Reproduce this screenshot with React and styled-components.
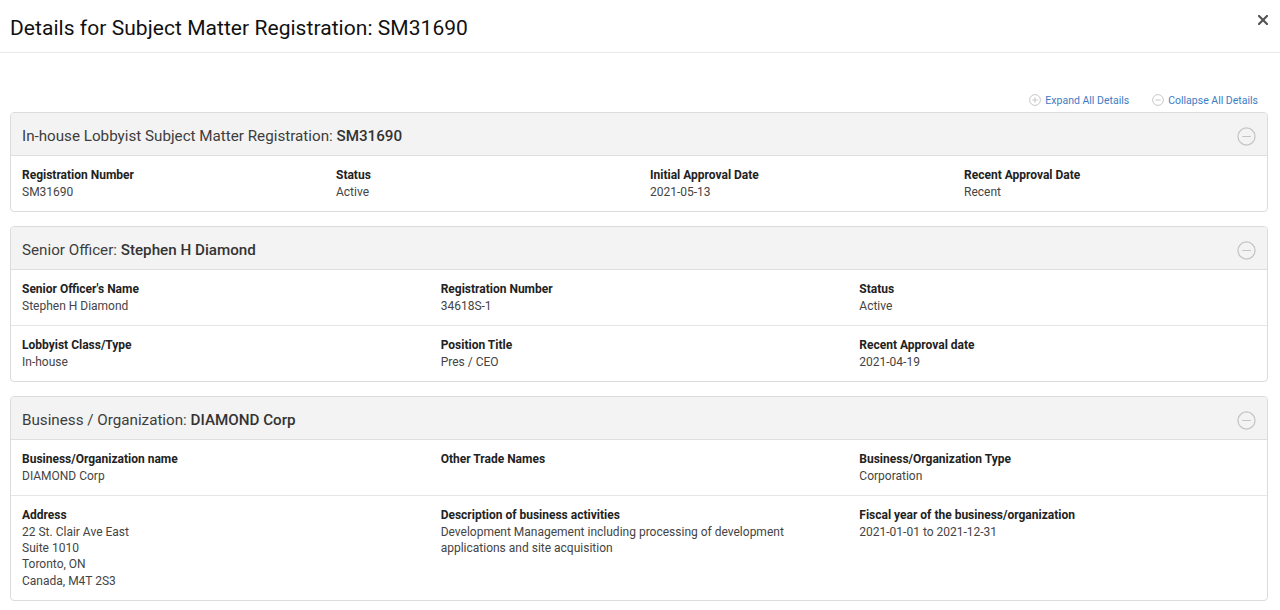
import React from "react";
import styled, { createGlobalStyle } from "styled-components";

const GlobalStyle = createGlobalStyle`
  html, body { margin: 0; padding: 0; background: #fff; }
  body { font-family: Roboto, "Liberation Sans", Arial, sans-serif; color: #333; }
  * { box-sizing: border-box; }
`;

const Modal = styled.div`
  width: 1280px;
  min-height: 610px;
  background: #fff;
`;

const TopBar = styled.header`
  height: 53px;
  border-bottom: 1px solid #e9e9e9;
  display: flex;
  align-items: center;
  justify-content: space-between;
  padding: 0 10px 0 10px;
`;

const Title = styled.h1`
  margin: 0;
  font-size: 21px;
  font-weight: 400;
  color: #111;
  letter-spacing: 0.05px;
  padding-top: 3px;
`;

const CloseButton = styled.button`
  border: 0;
  background: none;
  padding: 0;
  margin: -12px 0 0 0;
  width: 14px;
  height: 14px;
  display: flex;
  align-items: center;
  justify-content: center;
  cursor: pointer;
`;

const Body = styled.main`
  padding: 37px 12px 0 10px;
  display: flex;
  flex-direction: column;
  gap: 14px;
`;

const Toolbar = styled.div`
  display: flex;
  justify-content: flex-end;
  gap: 23px;
  padding-right: 10px;
  height: 20px;
  align-items: center;
  margin-bottom: -12px;
`;

const ToolLink = styled.a`
  display: inline-flex;
  align-items: center;
  gap: 4px;
  font-size: 10.5px;
  color: #3d7cc4;
  text-decoration: none;
  cursor: pointer;
`;

const Card = styled.section`
  border: 1px solid #dcdcdc;
  border-radius: 4px;
  overflow: hidden;
`;

const CardHeader = styled.div`
  height: 43px;
  background: #f3f3f3;
  border-bottom: 1px solid #dedede;
  display: flex;
  align-items: center;
  justify-content: space-between;
  padding: 4px 11px 0 11px;
`;

const CardTitle = styled.h2`
  margin: 0;
  font-size: 15.2px;
  font-weight: 400;
  color: #3d3d3d;
  strong { font-weight: 500; color: #333; }
`;

const Row = styled.div`
  display: grid;
  grid-template-columns: repeat(${(p) => p.$cols}, 1fr);
  & + & { border-top: 1px solid #e6e6e6; }
`;

const Field = styled.div`
  padding: 12px 11px 11px 11px;
  font-size: 12px;
`;

const Label = styled.div`
  font-weight: 700;
  color: #222;
  line-height: 15.7px;
`;

const Value = styled.div`
  color: #444;
  line-height: 16.3px;
  white-space: pre-line;
  max-width: ${(p) => (p.$narrow ? "360px" : "none")};
`;

const CircleIcon = ({ plus, size = 12, color = "#bdbdbd" }) => (
  <svg width={size} height={size} viewBox="0 0 20 20" fill="none" stroke={color} strokeWidth={size > 14 ? 1.3 : 1.4}>
    <circle cx="10" cy="10" r="9" />
    <line x1="5.5" y1="10" x2="14.5" y2="10" />
    {plus && <line x1="10" y1="5.5" x2="10" y2="14.5" />}
  </svg>
);

const sections = [
  {
    title: "In-house Lobbyist Subject Matter Registration: ",
    bold: "SM31690",
    cols: 4,
    rows: [
      [
        ["Registration Number", "SM31690"],
        ["Status", "Active"],
        ["Initial Approval Date", "2021-05-13"],
        ["Recent Approval Date", "Recent"],
      ],
    ],
  },
  {
    title: "Senior Officer: ",
    bold: "Stephen H Diamond",
    cols: 3,
    rows: [
      [
        ["Senior Officer's Name", "Stephen H Diamond"],
        ["Registration Number", "34618S-1"],
        ["Status", "Active"],
      ],
      [
        ["Lobbyist Class/Type", "In-house"],
        ["Position Title", "Pres / CEO"],
        ["Recent Approval date", "2021-04-19"],
      ],
    ],
  },
  {
    title: "Business / Organization: ",
    bold: "DIAMOND Corp",
    cols: 3,
    rows: [
      [
        ["Business/Organization name", "DIAMOND Corp"],
        ["Other Trade Names", ""],
        ["Business/Organization Type", "Corporation"],
      ],
      [
        ["Address", "22 St. Clair Ave East\nSuite 1010\nToronto, ON\nCanada, M4T 2S3"],
        ["Description of business activities", "Development Management including processing of development applications and site acquisition", true],
        ["Fiscal year of the business/organization", "2021-01-01 to 2021-12-31"],
      ],
    ],
  },
];

export default function App() {
  return (
    <>
      <GlobalStyle />
      <Modal>
        <TopBar>
          <Title>Details for Subject Matter Registration: SM31690</Title>
          <CloseButton aria-label="Close">
            <svg width="10" height="10" viewBox="0 0 10 10" stroke="#555" strokeWidth="2.2" strokeLinecap="square">
              <line x1="1" y1="1" x2="9" y2="9" />
              <line x1="9" y1="1" x2="1" y2="9" />
            </svg>
          </CloseButton>
        </TopBar>
        <Body>
          <Toolbar>
            <ToolLink>
              <CircleIcon plus />
              Expand All Details
            </ToolLink>
            <ToolLink>
              <CircleIcon />
              Collapse All Details
            </ToolLink>
          </Toolbar>
          {sections.map((s) => (
            <Card key={s.bold}>
              <CardHeader>
                <CardTitle>
                  {s.title}
                  <strong>{s.bold}</strong>
                </CardTitle>
                <CircleIcon size={19} color="#c4c4c4" />
              </CardHeader>
              {s.rows.map((row, i) => (
                <Row key={i} $cols={s.cols}>
                  {row.map(([label, value, narrow]) => (
                    <Field key={label}>
                      <Label>{label}</Label>
                      <Value $narrow={narrow}>{value}</Value>
                    </Field>
                  ))}
                </Row>
              ))}
            </Card>
          ))}
        </Body>
      </Modal>
    </>
  );
}
